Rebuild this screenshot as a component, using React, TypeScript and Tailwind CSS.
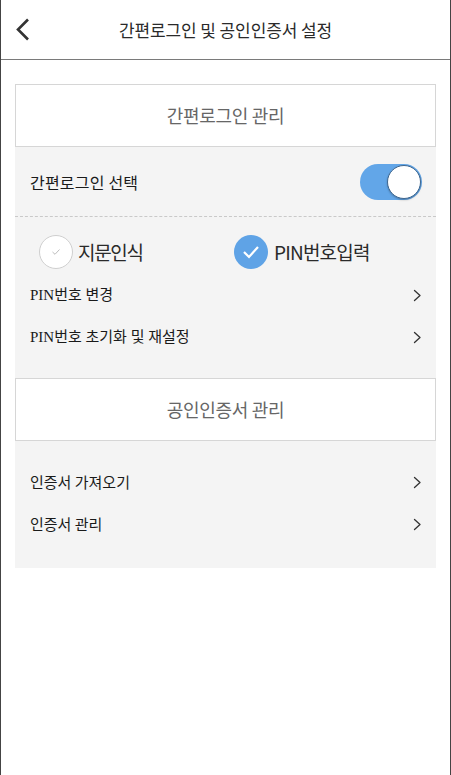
import React from "react";

const KR = "font-['Noto_Sans_CJK_KR','Noto_Sans',sans-serif]";
const MIX = "font-['Liberation_Serif','Noto_Sans_CJK_KR',serif]";

function Chevron() {
  return (
    <svg width="9" height="13" viewBox="0 0 9 13" fill="none">
      <path d="M1.5 1.5L7 6.5L1.5 11.5" stroke="#333" strokeWidth="1.3" strokeLinecap="round" strokeLinejoin="round" />
    </svg>
  );
}

function MenuItem({ label, mixed }: { label: string; mixed?: boolean }) {
  return (
    <div className="flex h-[42px] items-center justify-between pl-[15px] pr-[14px]">
      <span className={`${mixed ? MIX : KR} text-[15px] tracking-[0px] text-[#1a1a1a]`}>{label}</span>
      <Chevron />
    </div>
  );
}

function Card({ label }: { label: string }) {
  return (
    <div className="flex h-[63px] items-center justify-center border border-[#d6d6d6] bg-white">
      <span className={`${KR} text-[18px] tracking-[-0.3px] text-[#666]`}>{label}</span>
    </div>
  );
}

export default function App() {
  return (
    <div className="min-h-[775px] w-[451px] border-x border-[#444] bg-white">
      <header className="relative flex h-[60px] items-center justify-center border-b border-[#7a7a7a]">
        <svg className="absolute left-[14px] top-[18px]" width="16" height="23" viewBox="0 0 16 23" fill="none">
          <path d="M13 1.5L3 11.5L13 21.5" stroke="#333" strokeWidth="2.6" strokeLinecap="butt" strokeLinejoin="miter" />
        </svg>
        <h1 className={`${KR} text-[17px] tracking-[-0.1px] text-[#2a2a2a] font-normal`}>간편로그인 및 공인인증서 설정</h1>
      </header>

      <div className="px-[14px] pt-[24px]">
        <Card label="간편로그인 관리" />
        <div className="bg-[#f4f4f4] pb-[20px]">
          <div className="flex h-[69px] items-center justify-between pl-[15px] pr-[14px]">
            <span className={`${KR} text-[16px] tracking-[0.2px] text-[#1a1a1a]`}>간편로그인 선택</span>
            <div className="flex h-[36px] w-[62px] items-center justify-end rounded-full bg-[#62a6e8] pr-[1px]">
              <div className="h-[34px] w-[34px] rounded-full border border-[#3d6690] bg-white shadow-[0_1px_2px_rgba(0,0,0,0.25)]" />
            </div>
          </div>
          <div className="border-t border-dashed border-[#c9c9c9]" />
          <div className="flex h-[57px] items-start pt-[18px]">
            <div className="ml-[24px] flex w-[195px] items-center gap-[5px]">
              <div className="flex h-[34px] w-[34px] items-center justify-center rounded-full border border-[#cfcfcf] bg-white">
                <svg width="10" height="8" viewBox="0 0 10 8" fill="none">
                  <path d="M1.5 4L4 6.3L8.5 1.5" stroke="#bdbdbd" strokeWidth="1" />
                </svg>
              </div>
              <span className={`${KR} text-[19px] tracking-[-1.3px] text-[#2a2a2a]`}>지문인식</span>
            </div>
            <div className="flex items-center gap-[6px]">
              <div className="flex h-[34px] w-[34px] items-center justify-center rounded-full bg-[#5fa3e6]">
                <svg width="18" height="14" viewBox="0 0 18 14" fill="none">
                  <path d="M2 7L7 12L16 2" stroke="#fff" strokeWidth="2.2" />
                </svg>
              </div>
              <span className={`${KR} text-[19px] tracking-[-0.8px] text-[#2a2a2a]`}>PIN번호입력</span>
            </div>
          </div>
          <MenuItem label="PIN번호 변경" mixed />
          <MenuItem label="PIN번호 초기화 및 재설정" mixed />
        </div>

        <Card label="공인인증서 관리" />
        <div className="bg-[#f4f4f4] pb-[23px] pt-[20px]">
          <MenuItem label="인증서 가져오기" />
          <MenuItem label="인증서 관리" />
        </div>
      </div>
    </div>
  );
}
